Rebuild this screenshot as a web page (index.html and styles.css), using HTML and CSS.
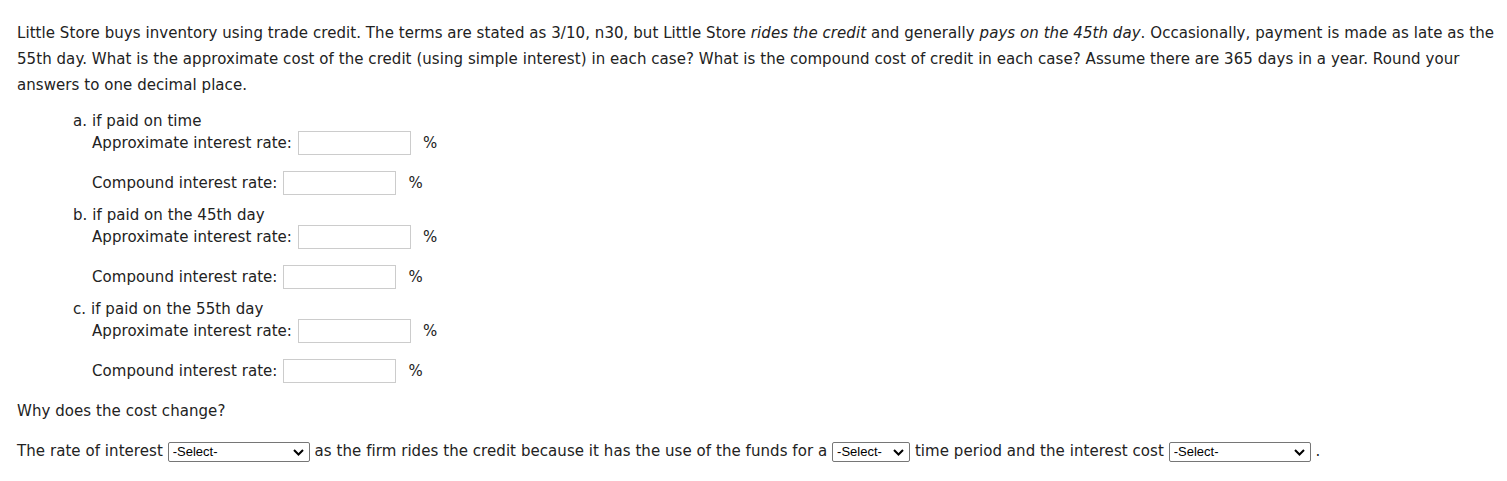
FILE: index.html
```html
<!DOCTYPE html>
<html>
<head>
<meta charset="utf-8">
<link rel="stylesheet" href="styles.css">
</head>
<body>
<div class="page">
  <p class="intro">Little Store buys inventory using trade credit. The terms are stated as 3/10, n30, but Little Store <i>rides the credit</i> and generally <i>pays on the 45th day</i>. Occasionally, payment is made as late as the 55th day. What is the approximate cost of the credit (using simple interest) in each case? What is the compound cost of credit in each case? Assume there are 365 days in a year. Round your answers to one decimal place.</p>
  <div class="parts">
    <div class="part">
      <div class="part-label">a. if paid on time</div>
      <div class="row"><span>Approximate interest rate:</span><input class="num" type="text"><span class="pct">%</span></div>
      <div class="row row2"><span>Compound interest rate:</span><input class="num" type="text"><span class="pct">%</span></div>
    </div>
    <div class="part">
      <div class="part-label">b. if paid on the 45th day</div>
      <div class="row"><span>Approximate interest rate:</span><input class="num" type="text"><span class="pct">%</span></div>
      <div class="row row2"><span>Compound interest rate:</span><input class="num" type="text"><span class="pct">%</span></div>
    </div>
    <div class="part">
      <div class="part-label">c. if paid on the 55th day</div>
      <div class="row"><span>Approximate interest rate:</span><input class="num" type="text"><span class="pct">%</span></div>
      <div class="row row2"><span>Compound interest rate:</span><input class="num" type="text"><span class="pct">%</span></div>
    </div>
  </div>
  <p class="why">Why does the cost change?</p>
  <p class="answer">The rate of interest <span class="sel-wrap"><select class="sel sel-wide"><option>-Select-</option></select><svg class="chev" width="11" height="7" viewBox="0 0 11 7"><path d="M1 1 L5.5 5.5 L10 1" fill="none" stroke="#000" stroke-width="2"/></svg></span> as the firm rides the credit because it has the use of the funds for a <span class="sel-wrap"><select class="sel sel-short"><option>-Select-</option></select><svg class="chev" width="11" height="7" viewBox="0 0 11 7"><path d="M1 1 L5.5 5.5 L10 1" fill="none" stroke="#000" stroke-width="2"/></svg></span> time period and the interest cost <span class="sel-wrap"><select class="sel sel-wide"><option>-Select-</option></select><svg class="chev" width="11" height="7" viewBox="0 0 11 7"><path d="M1 1 L5.5 5.5 L10 1" fill="none" stroke="#000" stroke-width="2"/></svg></span> .</p>
</div>
</body>
</html>
```

FILE: styles.css
```css
html, body {
  margin: 0;
  padding: 0;
  background: #ffffff;
}
.page {
  padding: 20px 8px 0 17px;
  font-family: "DejaVu Sans", Verdana, sans-serif;
  font-size: 15px;
  letter-spacing: 0.06px;
  color: #222222;
}
.intro {
  margin: 0;
  line-height: 26px;
}
.parts {
  margin: 13px 0 0 56px;
}
.part + .part {
  margin-top: 10px;
}
.part-label {
  line-height: 20px;
  height: 20px;
}
.row {
  display: flex;
  align-items: center;
  height: 24px;
  margin-left: 19px;
}
.row2 {
  margin-top: 16px;
}
.num {
  box-sizing: border-box;
  width: 113px;
  height: 24px;
  margin: 0 0 0 6px;
  border: 1px solid #cccccc;
  border-radius: 0;
  padding: 0 4px;
  font: inherit;
}
.pct {
  margin-left: 12px;
}
.why {
  margin: 15px 0 0 0;
  line-height: 26px;
}
.answer {
  margin: 14px 0 0 0;
  line-height: 26px;
}
.sel-wrap {
  position: relative;
  display: inline-block;
  vertical-align: middle;
  height: 20px;
  line-height: 0;
}
.sel {
  -webkit-appearance: none;
  appearance: none;
  box-sizing: border-box;
  height: 20px;
  padding: 0 4px;
  font-family: "Liberation Sans", Arial, sans-serif;
  font-size: 13px;
  letter-spacing: 0;
  color: #000;
  border: 1px solid #767676;
  border-radius: 2px;
  background: #fff;
  margin: 0;
}
.chev {
  position: absolute;
  right: 6px;
  top: 7px;
  pointer-events: none;
}
.sel-wide {
  width: 142px;
}
.sel-short {
  width: 78px;
}
```
